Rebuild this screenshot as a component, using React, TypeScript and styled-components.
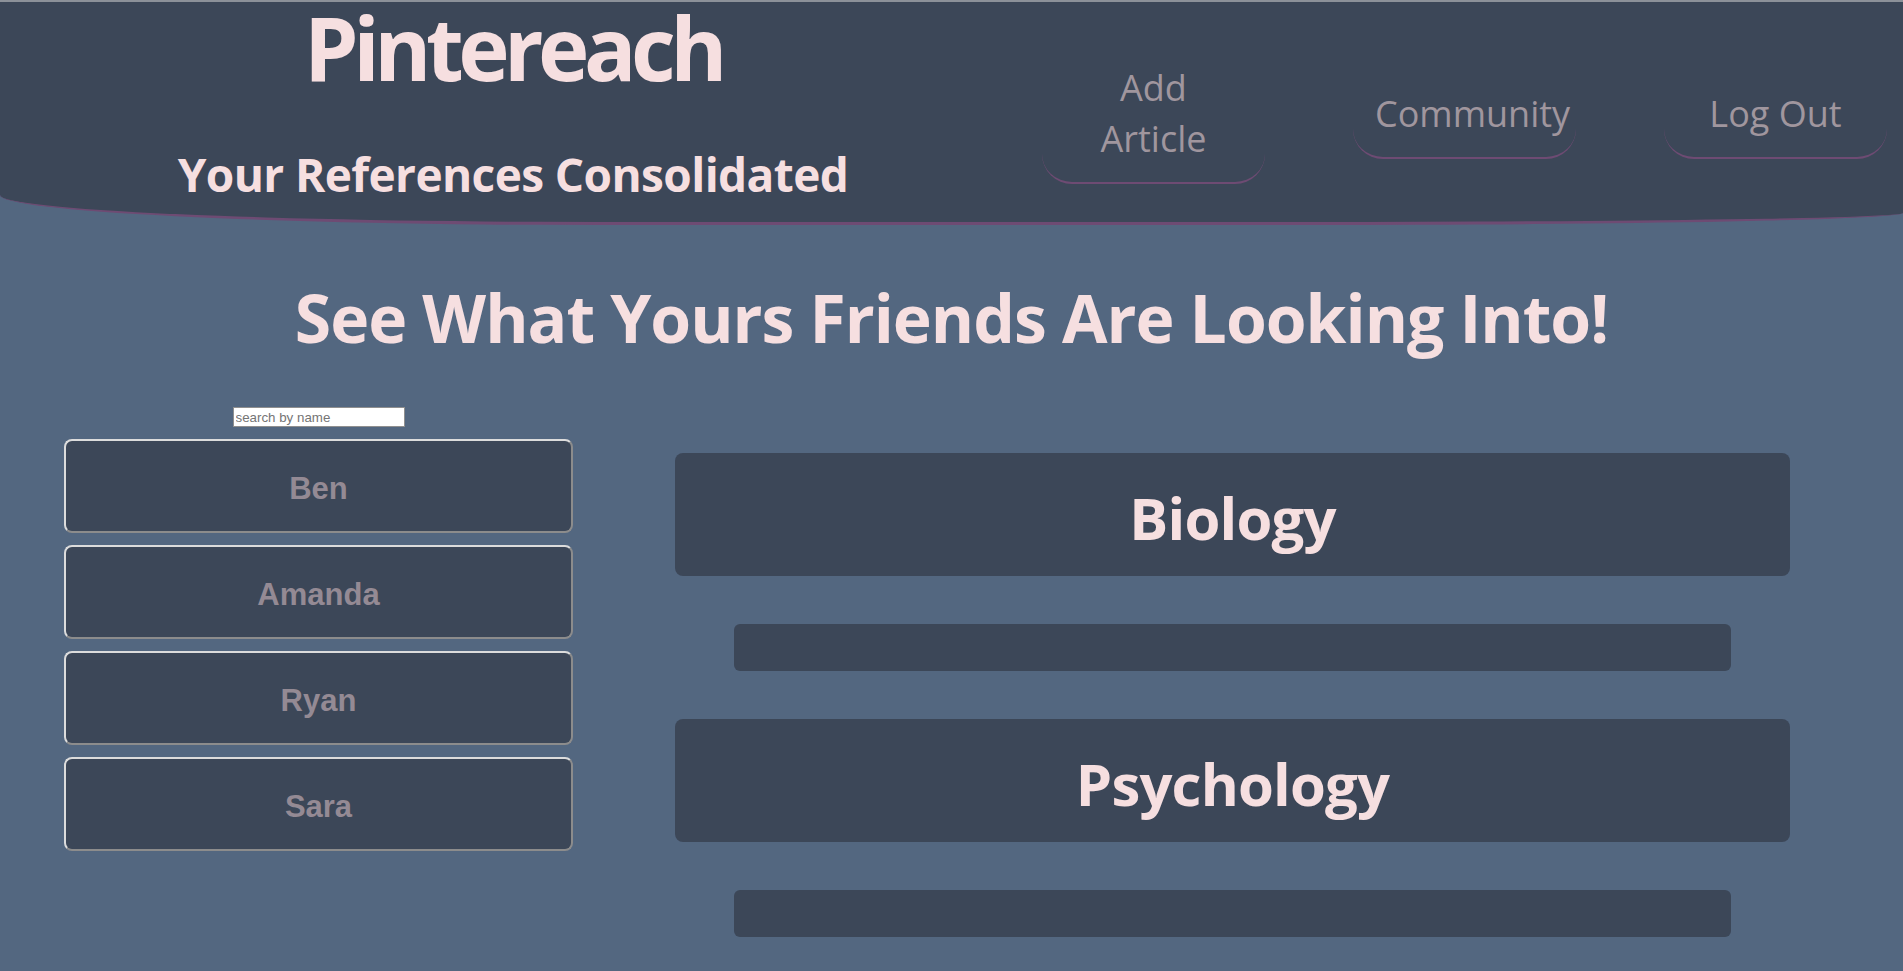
import React from "react";
import styled, { createGlobalStyle } from "styled-components";

const C = {
  header: "#3c4758",
  page: "#536780",
  pink: "#f6dfe0",
  nav: "#a0969e",
  purple: "#6e4b73",
  name: "#948a94",
};

const GlobalStyle = createGlobalStyle`
  html, body { margin: 0; padding: 0; background: ${C.page}; }
  body { font-family: "Open Sans", "Noto Sans", sans-serif; }
  * { box-sizing: border-box; }
`;

const Page = styled.div`
  min-height: 100vh;
  background: ${C.page};
  overflow: hidden;
`;

const Header = styled.header`
  display: flex;
  align-items: center;
  background: ${C.header};
  border-top: 2px solid #8c9199;
  border-bottom: 3px solid ${C.purple};
  border-bottom-left-radius: 600px 30px;
  border-bottom-right-radius: 600px 12px;
`;

const Brand = styled.div`
  flex: 1;
  display: flex;
  flex-direction: column;
  align-items: center;
  padding: 0 16px 18px 0;
`;

const Title = styled.h1`
  margin: 0;
  font-size: 87px;
  line-height: 90px;
  font-weight: 700;
  letter-spacing: -5.5px;
  color: ${C.pink};
`;

const Tagline = styled.h2`
  margin: 52px 0 0;
  font-size: 46px;
  line-height: 60px;
  font-weight: 700;
  letter-spacing: -0.6px;
  color: ${C.pink};
`;

const Nav = styled.nav`
  display: flex;
  align-items: center;
  gap: 88px;
  padding-right: 16px;
`;

const NavLink = styled.a`
  display: block;
  width: 223px;
  padding: 22px 22px 18px;
  text-align: center;
  font-size: 36px;
  line-height: 51px;
  font-weight: 400;
  color: ${C.nav};
  text-decoration: none;
  border-bottom: 2px solid ${C.purple};
  border-radius: 0 0 30px 30px;
  cursor: pointer;
`;

const Heading = styled.h1`
  margin: 47px 0 0;
  text-align: center;
  font-size: 66px;
  line-height: 90px;
  font-weight: 700;
  letter-spacing: -1px;
  color: ${C.pink};
`;

const Content = styled.main`
  display: flex;
  align-items: flex-start;
  margin-top: 45px;
  padding-left: 64px;
`;

const Sidebar = styled.aside`
  width: 509px;
  display: flex;
  flex-direction: column;
  align-items: center;
  gap: 12px;
`;

const Search = styled.input`
  width: 172px;
  height: 20px;
  padding: 1px 2px;
  border: 1px solid #8f8f8f;
  background: #fff;
  font-family: "Liberation Sans", Arial, sans-serif;
  font-size: 13.33px;
  color: #222;
  outline: none;
  &::placeholder { color: #757575; }
`;

const NameButton = styled.button`
  width: 100%;
  height: 94px;
  padding: 5px 0 0;
  background: ${C.header};
  border: 2px solid;
  border-color: #dcdcdc #8c8c8c #8c8c8c #dcdcdc;
  border-radius: 8px;
  font-family: "Liberation Sans", Arial, sans-serif;
  font-size: 31px;
  font-weight: 700;
  color: ${C.name};
  cursor: pointer;
`;

const Feed = styled.section`
  width: 1115px;
  margin-left: 102px;
  padding-top: 46px;
  display: flex;
  flex-direction: column;
  gap: 48px;
`;

const Category = styled.div`
  height: 123px;
  padding-top: 6px;
  display: flex;
  align-items: center;
  justify-content: center;
  background: ${C.header};
  border-radius: 8px;
`;

const CategoryTitle = styled.h2`
  margin: 0;
  font-size: 58px;
  line-height: 80px;
  font-weight: 700;
  letter-spacing: -0.8px;
  color: ${C.pink};
`;

const ArticleBar = styled.div`
  height: 47px;
  margin: 0 59px;
  background: ${C.header};
  border-radius: 6px;
`;

const friends = ["Ben", "Amanda", "Ryan", "Sara"];
const categories = ["Biology", "Psychology"];

export default function App() {
  return (
    <Page>
      <GlobalStyle />
      <Header>
        <Brand>
          <Title>Pintereach</Title>
          <Tagline>Your References Consolidated</Tagline>
        </Brand>
        <Nav>
          <NavLink>Add Article</NavLink>
          <NavLink>Community</NavLink>
          <NavLink>Log Out</NavLink>
        </Nav>
      </Header>
      <Heading>See What Yours Friends Are Looking Into!</Heading>
      <Content>
        <Sidebar>
          <Search placeholder="search by name" />
          {friends.map((f) => (
            <NameButton key={f}>{f}</NameButton>
          ))}
        </Sidebar>
        <Feed>
          {categories.map((c) => (
            <React.Fragment key={c}>
              <Category>
                <CategoryTitle>{c}</CategoryTitle>
              </Category>
              <ArticleBar />
            </React.Fragment>
          ))}
        </Feed>
      </Content>
    </Page>
  );
}
